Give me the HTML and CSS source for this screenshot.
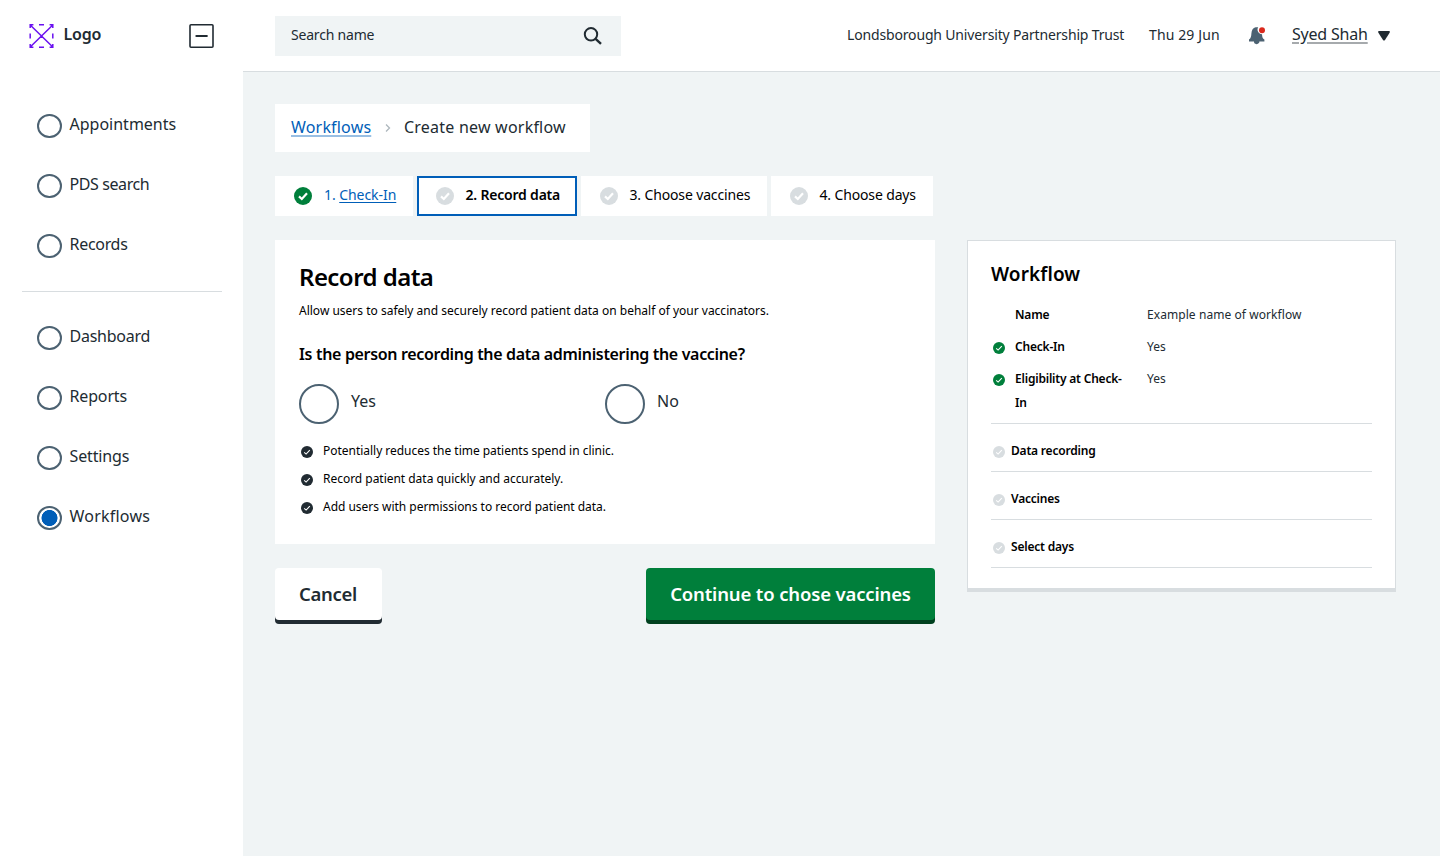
FILE: index.html
```html
<!DOCTYPE html>
<html lang="en">
<head>
<meta charset="utf-8">
<title>Create new workflow</title>
<link rel="stylesheet" href="styles.css">
</head>
<body>
<svg class="defs" width="0" height="0" aria-hidden="true">
  <symbol id="tick" viewBox="0 0 18 18"><circle cx="9" cy="9" r="9" fill="currentColor"/><path d="M5 9.400 7.800 12 13 6.200" fill="none" stroke="#fff" stroke-width="2.200"/></symbol>
  <symbol id="tick-small" viewBox="0 0 12 12"><circle cx="6" cy="6" r="6" fill="currentColor"/><path d="M3.200 6.400 5.100 8.100 8.800 4.200" fill="none" stroke="#fff" stroke-width="1.100"/></symbol>
</svg>
<div class="app">
  <aside class="sidebar">
    <div class="brand">
      <svg class="brand-mark" width="25" height="24" viewBox="0 0 25 24" fill="none" stroke="#6a11f0" stroke-width="1.500"><path d="M1.200 1 23.800 23M23.800 1 1.200 23M1.200 4V.8H4.400M20.600.8H23.800V4M1.200 20V23.200H4.400M20.600 23.200H23.800V20M10 .8h5M10 23.200h5M1.200 9.500v5M23.800 9.500v5"/></svg>
      <span class="brand-name">Logo</span>
      <svg class="collapse" width="25" height="24" viewBox="0 0 25 24" fill="none" stroke="#212b32"><rect x="1" y=".8" width="23" height="22.400" rx="1" stroke-width="1.600"/><path d="M7.400 12h10.400" stroke-width="2.200" stroke-linecap="round"/></svg>
    </div>
    <nav class="nav">
      <a class="nav-item"><span class="dot"></span><span class="nav-label n1">Appointments</span></a>
      <a class="nav-item"><span class="dot"></span><span class="nav-label n2">PDS search</span></a>
      <a class="nav-item"><span class="dot"></span><span class="nav-label n3">Records</span></a>
    </nav>
    <nav class="nav nav-second">
      <a class="nav-item"><span class="dot"></span><span class="nav-label n4">Dashboard</span></a>
      <a class="nav-item"><span class="dot"></span><span class="nav-label n5">Reports</span></a>
      <a class="nav-item"><span class="dot"></span><span class="nav-label n6">Settings</span></a>
      <a class="nav-item"><span class="dot dot-on"></span><span class="nav-label n7">Workflows</span></a>
    </nav>
  </aside>
  <div class="page">
    <header class="topbar">
      <div class="search"><span class="search-text">Search name</span>
        <svg width="20" height="20" viewBox="0 0 20 20" fill="none" stroke="#212b32"><circle cx="8" cy="8.300" r="6.200" stroke-width="2"/><path d="m12.600 12.900 5.400 5" stroke-width="2.400"/></svg>
      </div>
      <span class="trust">Londsborough University Partnership Trust</span>
      <span class="date">Thu 29 Jun</span>
      <svg class="bell" width="20" height="20" viewBox="0 0 20 20"><path fill="#4c6272" d="M8.600 1.200H11.200A4.600 4.600 0 0 0 15 8.200C15.200 11.300 15.700 12.400 17.400 13.600V15.400H12A2.500 2.500 0 0 1 7 15.400H2V13.600C4 12 4.200 10.500 4.400 7.500 4.600 4 6 1.800 8.600 1.200ZM7 15H12.300V16.500Q9.600 20 7 16.500Z"/><circle cx="15" cy="4.200" r="3" fill="#da291c"/></svg>
      <a class="user">Syed Shah</a>
      <svg class="caret" width="12" height="10" viewBox="0 0 12 10"><path fill="#212b32" d="M1 0h10q1.400.300.600 1.800L7 9q-1 1.200-2 0L.4 1.800Q-.4.300 1 0Z"/></svg>
    </header>
    <main class="main">
      <div class="crumbs"><a class="crumb-link">Workflows</a><svg class="chev" width="6" height="8" viewBox="0 0 6 8"><path d="m1 .5 3.500 3.500L1 7.500" fill="none" stroke="#aeb7bd" stroke-width="1.300"/></svg><span class="crumb-now">Create new workflow</span></div>
      <div class="steps">
        <div class="step step-1"><svg class="ic green"><use href="#tick"/></svg><span class="step-label s1">1. <a>Check-In</a></span></div>
        <div class="step step-2"><svg class="ic grey"><use href="#tick"/></svg><span class="step-label s2">2. Record data</span></div>
        <div class="step step-3"><svg class="ic grey"><use href="#tick"/></svg><span class="step-label s3">3. Choose vaccines</span></div>
        <div class="step step-4"><svg class="ic grey"><use href="#tick"/></svg><span class="step-label s4">4. Choose days</span></div>
      </div>
      <div class="columns">
        <section class="form">
          <div class="card">
            <h1>Record data</h1>
            <p class="lead">Allow users to safely and securely record patient data on behalf of your vaccinators.</p>
            <h2>Is the person recording the data administering the vaccine?</h2>
            <div class="radios">
              <label class="radio"><span class="ring"></span><span class="radio-label">Yes</span></label>
              <label class="radio"><span class="ring"></span><span class="radio-label">No</span></label>
            </div>
            <ul class="benefits">
              <li><svg class="is dark"><use href="#tick-small"/></svg><span>Potentially reduces the time patients spend in clinic.</span></li>
              <li><svg class="is dark"><use href="#tick-small"/></svg><span>Record patient data quickly and accurately.</span></li>
              <li><svg class="is dark"><use href="#tick-small"/></svg><span>Add users with permissions to record patient data.</span></li>
            </ul>
          </div>
          <div class="actions">
            <button class="btn btn-cancel">Cancel</button>
            <button class="btn btn-go">Continue to chose vaccines</button>
          </div>
        </section>
        <section class="summary">
          <h3>Workflow</h3>
          <div class="row"><span class="slot"></span><b class="key">Name</b><span class="val">Example name of workflow</span></div>
          <div class="row"><span class="slot"><svg class="is green"><use href="#tick-small"/></svg></span><b class="key">Check-In</b><span class="val">Yes</span></div>
          <div class="row row-last"><span class="slot"><svg class="is green"><use href="#tick-small"/></svg></span><b class="key">Eligibility at Check-<br>In</b><span class="val">Yes</span></div>
          <div class="todo"><svg class="is grey"><use href="#tick-small"/></svg><b>Data recording</b></div>
          <div class="todo"><svg class="is grey"><use href="#tick-small"/></svg><b>Vaccines</b></div>
          <div class="todo"><svg class="is grey"><use href="#tick-small"/></svg><b>Select days</b></div>
        </section>
      </div>
    </main>
  </div>
</div>
</body>
</html>
```
FILE: styles.css
```css
* { box-sizing: border-box; margin: 0; padding: 0; }
body { font-family: "Noto Sans", "Open Sans", sans-serif; font-size: 16px; line-height: 24px; color: #212b32; background: #f0f4f5; white-space: nowrap; }
svg { display: block; flex: none; }
.defs { position: absolute; }
.app { display: flex; height: 856px; overflow: hidden; }

/* Sidebar */
.sidebar { width: 243px; flex: none; background: #fff; }
.brand { display: flex; height: 72px; padding: 24px 29px 0; }
.brand-name { margin: -2px auto 0 9.5px; font-size: 16px; font-weight: 600; letter-spacing: -.2px; }
.nav { margin: 0 21px 0 22px; padding: 24px 0 15px 15px; }
.nav-second { border-top: 1px solid #d8dde0; padding-top: 16px; }
.nav-item { display: flex; align-items: center; height: 60px; }
.dot { width: 24.5px; height: 24px; margin: 0 8px 0 0; border: 2px solid #4c6272; border-radius: 50%; flex: none; }
.dot-on { background: radial-gradient(circle, #005eb8 7.7px, #fff 8.3px); }
.nav-label { margin-bottom: 4px; }
.n2 { letter-spacing: -.4px; }
.n3 { letter-spacing: -.3px; }
.n4 { letter-spacing: -.25px; }
.n5, .n6 { letter-spacing: -.15px; }
.n7 { letter-spacing: .22px; }

/* Top bar */
.page { flex: 1; min-width: 0; }
.topbar { display: flex; align-items: center; height: 72px; padding: 0 49px 0 32px; background: #fff; border-bottom: 1px solid #d8dde0; }
.search { display: flex; align-items: center; justify-content: space-between; width: 346px; height: 40px; padding: 0 18px 0 16px; background: #f0f4f5; font-size: 14px; }
.search-text { margin-bottom: 1px; letter-spacing: -.2px; }
.trust { width: 278px; margin: 0 0 1px 226px; font-size: 14px; letter-spacing: -.16px; }
.date { width: 72px; margin: 0 0 1px 24px; font-size: 14px; letter-spacing: .12px; }
.bell { margin-left: 26px; }
.user { width: 76px; margin-left: 25px; margin-bottom: 4px; letter-spacing: -.2px; text-decoration: underline; text-decoration-color: #a6aaad; text-underline-offset: 2px; text-decoration-thickness: 2px; }
.caret { margin-left: 10px; }

/* Main */
.main { padding: 32px 44px 0 32px; }
.crumbs { display: flex; align-items: center; width: 315px; height: 48px; padding: 0 16px 3px; background: #fff; letter-spacing: .22px; }
.crumb-link { width: 80px; color: #005eb8; letter-spacing: .18px; text-decoration: underline; text-decoration-color: #99bfe3; text-decoration-thickness: 2px; text-underline-offset: 2px; }
.chev { margin: 3px 13px 0 14px; }
.steps { display: flex; gap: 4px; margin-top: 24px; font-size: 14px; color: #000; }
.step { display: flex; align-items: center; height: 40px; padding-left: 19px; background: #fff; }
.step-1 { width: 138px; }
.step-2 { width: 160px; padding-left: 17px; border: 2px solid #005eb8; font-weight: 600; }
.step-3 { width: 186px; }
.step-4 { width: 162px; }
.step-label { margin: 0 0 2px 12px; letter-spacing: -.14px; }
.step .s1 { color: #005eb8; letter-spacing: -.06px; }
.step .s2 { margin-left: 11.5px; letter-spacing: -.2px; }
.step .s3, .step .s4 { margin-left: 11.5px; }
.s1 a { text-decoration: underline; text-decoration-thickness: 1px; text-underline-offset: 2px; }
.ic { width: 18px; height: 18px; }
.is { width: 12px; height: 12px; }
.green { color: #007f3b; }
.grey { color: #d8dde0; }
.dark { color: #212b32; }
.columns { display: flex; gap: 32px; align-items: flex-start; margin-top: 24px; }
.form { width: 660px; flex: none; }
.card { height: 304px; padding: 21px 24px; background: #fff; color: #000; }
h1 { font-size: 24px; line-height: 32px; font-weight: 600; letter-spacing: -.55px; }
.lead { margin-top: 6px; font-size: 12px; }
h2 { margin-top: 19px; font-size: 16px; line-height: 24px; font-weight: 600; letter-spacing: -.33px; }
.radios { display: flex; margin-top: 18px; color: #212b32; }
.radio { display: flex; align-items: center; width: 306px; height: 40px; }
.ring { width: 40px; height: 40px; margin-right: 12px; border: 2px solid #4c6272; border-radius: 50%; }
.radio-label { margin-bottom: 7px; }
.benefits { display: flex; flex-direction: column; gap: 4px; margin-top: 15px; list-style: none; font-size: 12px; letter-spacing: -.025px; }
.benefits li { display: flex; height: 24px; padding-left: 2px; }
.benefits svg { margin: 7px 10px 0 0; }
.actions { display: flex; justify-content: space-between; margin-top: 24px; }
.btn { height: 52px; border: 0; border-radius: 4px; background: #fff; color: #212b32; box-shadow: 0 4px 0 #212b32; font: 600 18.5px/52px "Noto Sans", "Open Sans", sans-serif; letter-spacing: -.15px; white-space: nowrap; }
.btn-cancel { width: 107px; padding-right: 1px; letter-spacing: -.3px; }
.btn-go { width: 289px; background: #007f3b; box-shadow: 0 4px 0 #00401e; color: #fff; }

/* Summary */
.summary { flex: 1; height: 352px; padding: 21px 23px 0; background: #fff; border: 1px solid #d8dde0; border-bottom-width: 4px; font-size: 12px; }
h3 { height: 41px; color: #000; font-size: 19px; line-height: 25px; font-weight: 600; letter-spacing: .1px; }
.row { display: flex; margin-bottom: 8px; }
.row b, .todo b { font-weight: 600; color: #000; letter-spacing: -.2px; }
.val { letter-spacing: .07px; }
.row-last { height: 57px; margin-bottom: 0; border-bottom: 1px solid #d8dde0; }
.slot { width: 24px; padding: 7px 0 0 2px; }
.key { width: 132px; }
.todo { display: flex; height: 48px; padding: 15px 0 0 2px; border-bottom: 1px solid #d8dde0; }
.todo svg { margin: 7px 6px 0 0; }
```
